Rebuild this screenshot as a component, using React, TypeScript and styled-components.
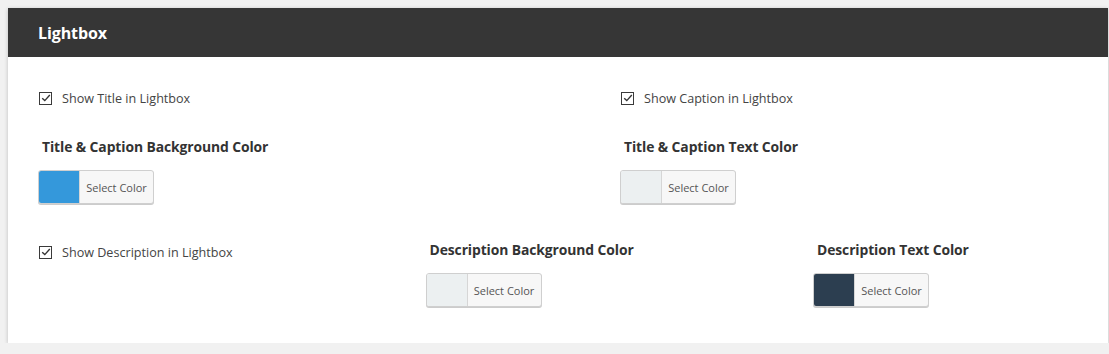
import React from "react";
import styled, { createGlobalStyle } from "styled-components";

const Global = createGlobalStyle`
  html, body { margin: 0; padding: 0; background: #f1f1f1; }
  body { font-family: "Open Sans", "Noto Sans", sans-serif; overflow: hidden; }
`;

const Page = styled.div`
  padding: 8px 0 0 8px;
  width: 1100px;
`;

const Panel = styled.section`
  background: #fff;
  box-shadow: 0 1px 4px rgba(0, 0, 0, 0.22);
  height: 335px;
  overflow: hidden;
`;

const Header = styled.header`
  background: #363636;
  height: 49px;
  display: flex;
  align-items: center;
  padding-left: 30px;
`;

const Title = styled.h2`
  margin: 0;
  color: #fff;
  font-size: 16px;
  font-weight: 700;
  letter-spacing: -0.1px;
`;

const Body = styled.div`
  padding: 33px 0 0 30px;
`;

const Row = styled.div<{ $cols: number; $colWidth: number; $gap: number }>`
  display: grid;
  grid-template-columns: repeat(${(p) => p.$cols}, ${(p) => p.$colWidth}px);
  margin-bottom: ${(p) => p.$gap}px;
`;

const Field = styled.div`
  display: flex;
  flex-direction: column;
`;

const CheckLabel = styled.label<{ $top: number }>`
  display: flex;
  align-items: center;
  gap: 10px;
  font-size: 12.6px;
  color: #444;
  height: 16px;
  margin-top: ${(p) => p.$top}px;
`;

const Box = styled.span`
  width: 13px;
  height: 13px;
  box-sizing: border-box;
  border: 1.5px solid #3a3a3a;
  display: inline-flex;
  align-items: center;
  justify-content: center;
  margin-left: 1px;
`;

const Heading = styled.h4<{ $top: number }>`
  margin: ${(p) => p.$top}px 0 0 4px;
  font-size: 13.9px;
  font-weight: 700;
  color: #333;
  line-height: 16px;
  letter-spacing: -0.1px;
`;

const PickerButton = styled.button`
  margin-top: 15px;
  display: flex;
  align-items: stretch;
  width: 116px;
  height: 34px;
  padding: 0;
  box-sizing: border-box;
  border: 1px solid #cfcfcf;
  border-radius: 3px;
  background: #f7f7f7;
  box-shadow: 0 1px 0 #ccc;
  overflow: hidden;
  cursor: pointer;
  font-family: inherit;
`;

const Swatch = styled.span<{ $color: string }>`
  width: 40px;
  background: ${(p) => p.$color};
  border-right: 1px solid #d6d6d6;
`;

const PickerText = styled.span`
  flex: 1;
  display: flex;
  align-items: center;
  justify-content: center;
  font-size: 11px;
  color: #555;
`;

const Check = ({ label, top = 0 }: { label: string; top?: number }) => (
  <CheckLabel $top={top}>
    <Box>
      <svg width="10" height="10" viewBox="0 0 10 10">
        <path d="M1.2 5.2 L3.8 7.6 L8.8 2" fill="none" stroke="#333" strokeWidth="1.4" />
      </svg>
    </Box>
    {label}
  </CheckLabel>
);

const ColorField = ({ title, color, top }: { title: string; color: string; top: number }) => (
  <Field>
    <Heading $top={top}>{title}</Heading>
    <PickerButton>
      <Swatch $color={color} />
      <PickerText>Select Color</PickerText>
    </PickerButton>
  </Field>
);

export default function App() {
  return (
    <>
      <Global />
      <Page>
        <Panel>
          <Header>
            <Title>Lightbox</Title>
          </Header>
          <Body>
            <Row $cols={2} $colWidth={582} $gap={38}>
              <Field>
                <Check label="Show Title in Lightbox" />
                <ColorField title="Title & Caption Background Color" color="#3498db" top={33} />
              </Field>
              <Field>
                <Check label="Show Caption in Lightbox" />
                <ColorField title="Title & Caption Text Color" color="#ecf0f1" top={33} />
              </Field>
            </Row>
            <Row $cols={3} $colWidth={387.5} $gap={0}>
              <Field>
                <Check label="Show Description in Lightbox" top={2} />
              </Field>
              <ColorField title="Description Background Color" color="#ecf0f1" top={0} />
              <ColorField title="Description Text Color" color="#2c3e50" top={0} />
            </Row>
          </Body>
        </Panel>
      </Page>
    </>
  );
}
